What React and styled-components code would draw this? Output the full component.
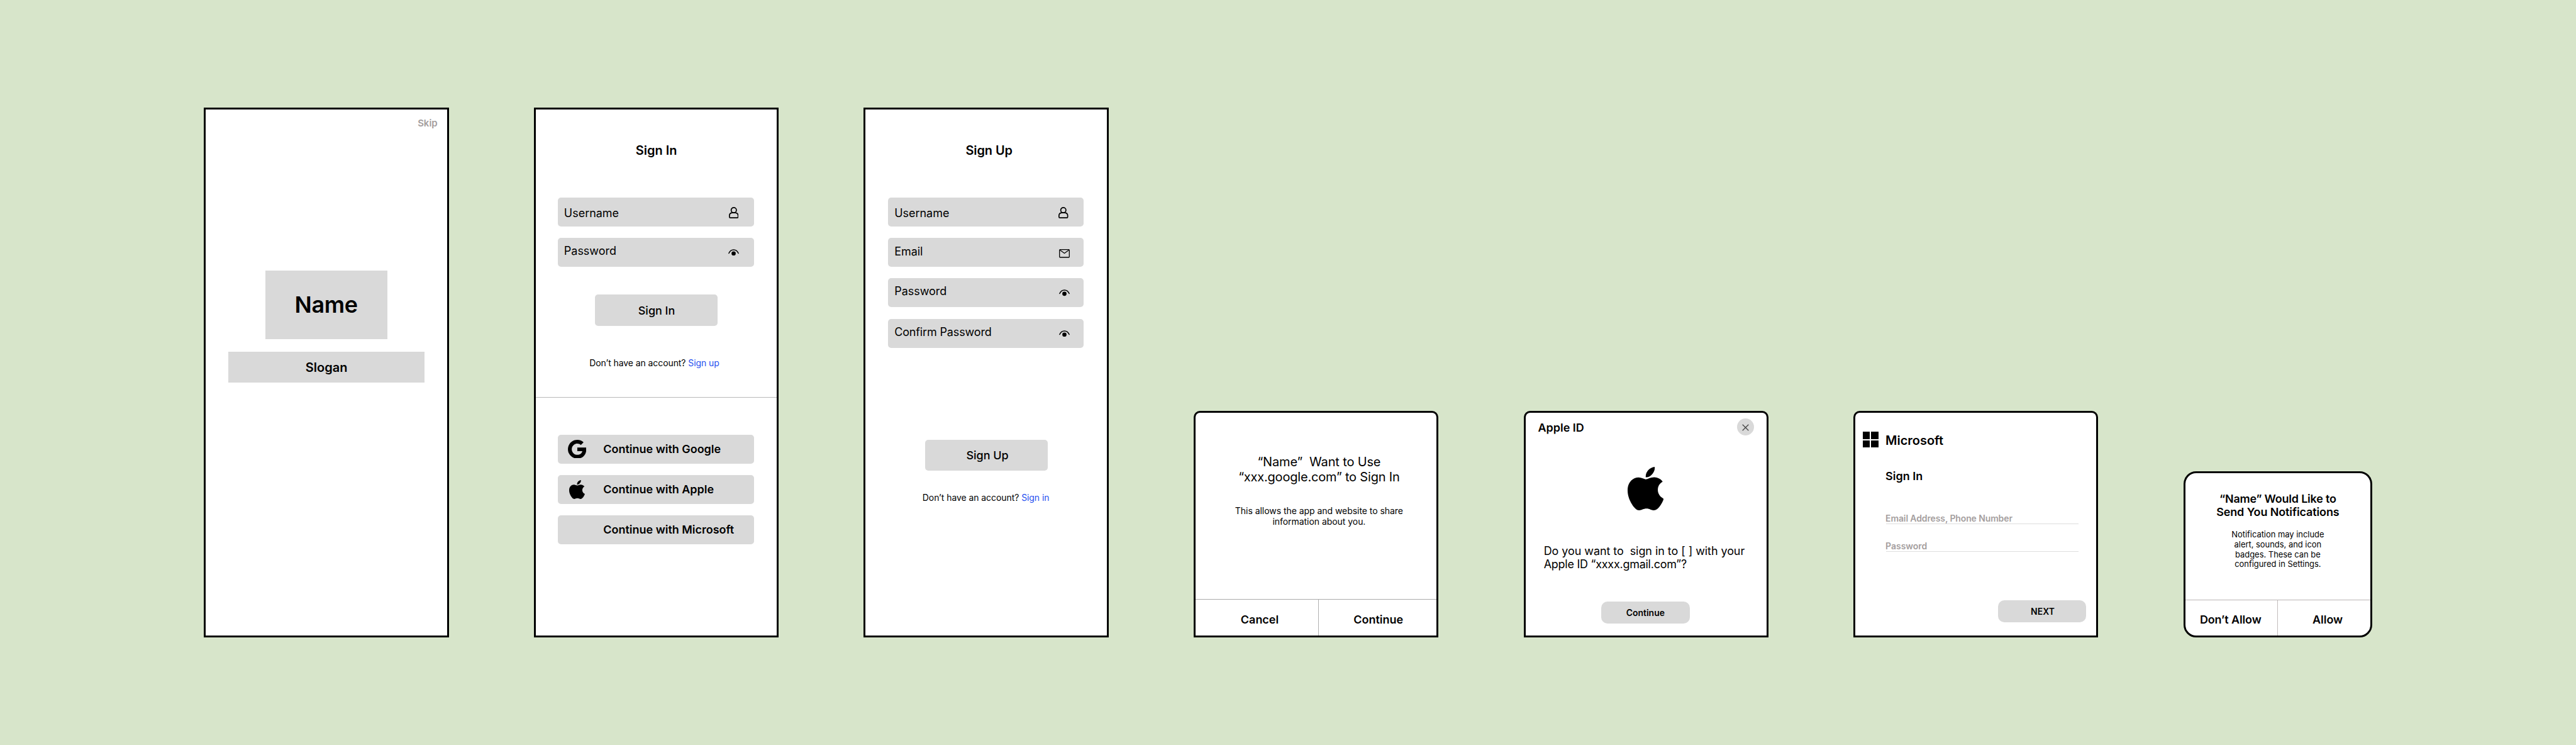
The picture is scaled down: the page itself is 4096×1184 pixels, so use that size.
import React from 'react';
import styled, { createGlobalStyle } from 'styled-components';
import { AiFillApple, AiOutlineGoogle } from 'react-icons/ai';

const u = (n) => `${(n * 0.9986).toFixed(2)}px`;

const GlobalStyle = createGlobalStyle`
  * { box-sizing: border-box; }
  html, body { margin: 0; padding: 0; }
  body {
    background: #d7e5ca;
    color: #000;
    font-family: Inter, "Liberation Sans", sans-serif;
  }
`;

const Board = styled.main`
  width: 4096px;
  height: 1184px;
  padding: 170.7px 0 0 324.4px;
  background: #d7e5ca;
  overflow: hidden;
`;

const Screens = styled.div`
  display: flex;
  align-items: flex-end;
  gap: 135.1px;
  height: 842.8px;
`;

const Frame = styled.section`
  flex: none;
  display: flex;
  flex-direction: column;
  width: ${(p) => u(p.$w || 390)};
  height: ${(p) => u(p.$h || 844)};
  margin-bottom: ${(p) => (p.$h ? '0.4px' : '0')};
  border: 3px solid #000;
  border-radius: ${(p) => p.$radius || '0'};
  background: #fff;
  overflow: hidden;
`;

const Text = styled.p`
  margin: 0;
  margin-top: ${(p) => u(p.$top || 0)};
  margin-left: ${(p) => u(p.$left || 0)};
  font-size: ${(p) => u(p.$size || 18)};
  line-height: ${(p) => u(p.$lh || Math.round((p.$size || 18) * 12.1) / 10)};
  font-weight: ${(p) => p.$weight || 400};
  text-align: ${(p) => p.$align || 'left'};
  letter-spacing: ${(p) => p.$track || 0}px;
  color: ${(p) => p.$color || '#000'};
  white-space: pre;
`;

const Line = styled.span`
  display: block;
  letter-spacing: ${(p) => p.$track}px;
`;

const Skip = styled.a`
  align-self: flex-end;
  margin: ${u(13.5)} ${u(15.2)} 0 0;
  font-size: ${u(15)};
  line-height: ${u(18)};
  font-weight: 600;
  color: #a49e9e;
`;

const Placeholder = styled.div`
  align-self: center;
  display: flex;
  align-items: center;
  justify-content: center;
  margin-top: ${(p) => u(p.$top)};
  width: ${(p) => u(p.$w)};
  height: ${(p) => u(p.$h)};
  background: #d9d9d9;
`;

const Stack = styled.div`
  display: flex;
  flex-direction: column;
  gap: ${u(18.4)};
  width: ${u(312.2)};
  margin: ${(p) => u(p.$top)} 0 0 ${u(35.2)};
`;

const FieldBox = styled.label`
  display: flex;
  align-items: flex-start;
  height: ${u(46)};
  padding-left: ${(p) => u(p.$pad)};
  border-radius: 5px;
  background: #d9d9d9;
`;

const FieldIcon = styled.span`
  display: flex;
  margin: ${(p) => u(p.$top)} ${(p) => u(p.$right)} 0 auto;
`;

const Provider = styled.button`
  display: grid;
  grid-template-columns: ${u(72.4)} 1fr;
  align-items: center;
  height: ${u(46)};
  padding: 0;
  border: 0;
  border-radius: 5px;
  background: #d9d9d9;
  font: 600 ${u(18)} / ${u(21.8)} Inter, sans-serif;
  color: #000;
  text-align: left;
`;

const ProviderIcon = styled.span`
  display: flex;
  justify-content: center;
  padding-right: ${u(11)};
`;

const Button = styled.button`
  align-self: flex-start;
  flex: none;
  display: flex;
  align-items: center;
  justify-content: center;
  width: ${(p) => u(p.$w)};
  height: ${(p) => u(p.$h)};
  margin: ${(p) => u(p.$top)} 0 0 ${(p) => u(p.$left)};
  padding: 0 0 0 ${(p) => u(p.$shift || 0)};
  border: 0;
  border-radius: ${(p) => p.$radius}px;
  background: #d9d9d9;
  color: #000;
  font-family: Inter, sans-serif;
  font-size: ${(p) => u(p.$size)};
  font-weight: ${(p) => p.$weight};
`;

const Link = styled.a`
  color: #1f4ff0;
`;

const Divider = styled.hr`
  flex: none;
  width: 100%;
  height: 1px;
  margin: ${(p) => u(p.$top)} 0 0;
  border: 0;
  background: #b8b8b8;
`;

const Actions = styled.footer`
  display: flex;
  flex: 1;
  margin-top: ${(p) => u(p.$top)};
  border-top: 1px solid ${(p) => p.$line};
`;

const Action = styled.button`
  display: flex;
  align-items: center;
  justify-content: center;
  width: ${(p) => (p.$w ? u(p.$w) : 'auto')};
  flex: ${(p) => (p.$w ? 'none' : 1)};
  padding: ${(p) => p.$pad};
  border: 0;
  border-left: ${(p) => (p.$line ? `1px solid ${p.$line}` : '0')};
  background: transparent;
  color: #000;
  font: 600 ${u(18)} / ${u(21.8)} Inter, sans-serif;
  letter-spacing: ${(p) => p.$track || 0}px;
  white-space: pre;
`;

const TitleBar = styled.header`
  display: flex;
  align-items: flex-start;
  justify-content: space-between;
  padding: ${u(9.7)} ${u(20)} 0 ${u(20)};
`;

const Close = styled.button`
  display: flex;
  align-items: center;
  justify-content: center;
  width: ${u(27.2)};
  height: ${u(27.2)};
  padding: 1px 0 0 0;
  border: 0;
  border-radius: 50%;
  background: #d9d9d9;
`;

const AppleMark = styled.div`
  display: flex;
  margin: ${u(49.7)} 0 0 ${u(162.4)};
`;

const Brand = styled.header`
  display: flex;
  align-items: flex-start;
  margin: ${u(30.8)} 0 0 ${u(11.9)};
`;

const Tiles = styled.span`
  display: grid;
  grid-template-columns: 1fr 1fr;
  gap: 2px;
  width: 25px;
  height: 25px;
`;

const Tile = styled.i`
  background: #000;
`;

const Underlined = styled.div`
  width: ${u(306.2)};
  margin: ${(p) => u(p.$top)} 0 0 ${u(48.9)};
  border-bottom: 1px solid #dedede;
`;

const AppleGlyph = styled(AiFillApple)`
  width: ${(p) => p.width};
  height: ${(p) => p.height};
`;

const GoogleGlyph = styled(AiOutlineGoogle)`
  width: 29.3px;
  height: 29.8px;
`;

function UserIcon() {
  return (
    <svg width="15.5" height="18" viewBox="0 0 15.5 18" fill="none" stroke="#000" strokeWidth="1.7">
      <circle cx="7.75" cy="5" r="4.15" />
      <path d="M4.9 9.2H10.6C13 9.6 14.65 11.3 14.65 13.6V15.7Q14.65 17.1 13.2 17.1H2.3Q.85 17.1 .85 15.7V13.6C.85 11.3 2.5 9.6 4.9 9.2Z" />
    </svg>
  );
}

function EyeIcon() {
  return (
    <svg width="17" height="10.4" viewBox="0 0 17 10.4">
      <path d="M.9 6.6C2.3 3.1 5.2.9 8.5.9S14.7 3.1 16.1 6.6" fill="none" stroke="#000" strokeWidth="1.5" strokeLinecap="round" />
      <circle cx="8.5" cy="6.8" r="3.4" />
    </svg>
  );
}

function MailIcon() {
  return (
    <svg width="17" height="13.7" viewBox="0 0 17 13.7" fill="none" stroke="#000" strokeWidth="1.3" strokeLinejoin="round">
      <rect x=".7" y=".7" width="15.6" height="12.3" rx="1" />
      <path d="M1.2 1.3L8.5 6.6L15.8 1.3" />
    </svg>
  );
}

function Field({ label, pad, textTop, iconTop, iconRight, icon, track }) {
  return (
    <FieldBox $pad={pad}>
      <Text $top={textTop} $track={track}>{label}</Text>
      <FieldIcon $top={iconTop} $right={iconRight}>{icon}</FieldIcon>
    </FieldBox>
  );
}

const Apple = ({ w, h }) => (
  <AppleGlyph viewBox="163 96 699 832" preserveAspectRatio="none" width={`${w}px`} height={`${h}px`} />
);

const grey = '#a49e9e';

export default function App() {
  return (
    <Board>
      <GlobalStyle />
      <Screens>
        <Frame>
          <Skip>Skip</Skip>
          <Placeholder $w={195} $h={108.8} $top={225.3}>
            <Text $size={36} $weight={600} $track={-0.3} $left={-1}>Name</Text>
          </Placeholder>
          <Placeholder $w={312.2} $h={49.4} $top={19.9}>
            <Text $size={20} $weight={600} $top={1}>Slogan</Text>
          </Placeholder>
        </Frame>

        <Frame>
          <Text $size={20} $weight={600} $align="center" $top={52.9}>Sign In</Text>
          <Stack $top={63.2}>
            <Field label="Username" pad={9.8} textTop={13.8} iconTop={15.2} iconRight={24.6} icon={<UserIcon />} />
            <Field label="Password" pad={9.8} textTop={9.8} iconTop={17.7} iconRight={24} icon={<EyeIcon />} />
          </Stack>
          <Button $w={195} $h={50} $top={44.3} $left={94.2} $radius={5} $size={18} $weight={500} $shift={1.4}>Sign In</Button>
          <Text $size={14} $lh={17} $top={50} $left={85.4} $track={-0.07}>
            Don’t have an account? <Link>Sign up</Link>
          </Text>
          <Divider $top={46.4} />
          <Stack $top={58.3}>
            <Provider><ProviderIcon><GoogleGlyph viewBox="136.2 128.5 751.7 767.5" /></ProviderIcon>Continue with Google</Provider>
            <Provider><ProviderIcon><Apple w={25} h={30} /></ProviderIcon>Continue with Apple</Provider>
            <Provider><ProviderIcon />Continue with Microsoft</Provider>
          </Stack>
        </Frame>

        <Frame>
          <Text $size={20} $weight={600} $align="center" $top={52.9} $left={9} $track={-0.1}>Sign Up</Text>
          <Stack $top={63.2}>
            <Field label="Username" pad={10.6} textTop={13.8} iconTop={15.2} iconRight={24.7} icon={<UserIcon />} />
            <Field label="Email" pad={10.6} textTop={10.7} iconTop={18} iconRight={22} icon={<MailIcon />} />
            <Field label="Password" pad={10.6} textTop={10} iconTop={17.9} iconRight={22} icon={<EyeIcon />} />
            <Field label="Confirm Password" pad={10.6} textTop={10.2} iconTop={18.1} iconRight={22} icon={<EyeIcon />} track={-0.12} />
          </Stack>
          <Button $w={195.4} $h={49.4} $top={146.7} $left={94.2} $radius={5} $size={18} $weight={500} $shift={4}>Sign Up</Button>
          <Text $size={14} $lh={17} $top={33.5} $left={90.5} $track={-0.06}>
            Don’t have an account? <Link>Sign in</Link>
          </Text>
        </Frame>

        <Frame $h={361} $radius="10px 10px 0 0">
          <Text $size={20} $lh={24.2} $align="center" $top={66.2} $left={9.4}>
            <Line $track={-0.13}>“Name”{'  '}Want to Use</Line>
            <Line $track={-0.17}>“xxx.google.com” to Sign In</Line>
          </Text>
          <Text $size={14} $lh={17} $align="center" $top={33} $left={9.4} $track={-0.03}>
            {'This allows the app and website to share\ninformation about you.'}
          </Text>
          <Actions $top={115.6} $line="#aaa">
            <Action $w={195.3} $pad="7px 0 0 9px">Cancel</Action>
            <Action $line="#b0b0b0" $pad="7px 0 0 2px">Continue</Action>
          </Actions>
        </Frame>

        <Frame $h={361} $radius="10px 10px 0 0">
          <TitleBar>
            <Text $weight={600} $top={3.4}>Apple ID</Text>
            <Close aria-label="Close">
              <svg width="11" height="11" viewBox="0 0 11 11" stroke="#444" strokeWidth="1.3">
                <path d="M.7.7L10.3 10.3M10.3.7L.7 10.3" />
              </svg>
            </Close>
          </TitleBar>
          <AppleMark><Apple w={57.5} h={69} /></AppleMark>
          <Text $top={53.7} $left={29.2} $lh={21.7}>
            <Line $track={-0.05}>Do you want to{'  '}sign in to [ ] with your</Line>
            <Line $track={-0.24}>Apple ID “xxxx.gmail.com”?</Line>
          </Text>
          <Button $w={140.8} $h={35.3} $top={48.2} $left={120.7} $radius={10} $size={14} $weight={600}>Continue</Button>
        </Frame>

        <Frame $h={361} $radius="10px 10px 0 0">
          <Brand>
            <Tiles><Tile /><Tile /><Tile /><Tile /></Tiles>
            <Text $size={20} $weight={600} $top={1.7} $left={11.2}>Microsoft</Text>
          </Brand>
          <Text $weight={600} $left={48.1} $top={33.6}>Sign In</Text>
          <Underlined $top={48.7}>
            <Text $size={14} $lh={16} $weight={600} $color={grey} $left={-0.8} $track={-0.1}>Email Address, Phone Number</Text>
          </Underlined>
          <Underlined $top={26.6}>
            <Text $size={14} $lh={16} $weight={600} $color={grey} $left={-0.8}>Password</Text>
          </Underlined>
          <Button $w={140.8} $h={35.3} $top={77.2} $left={227} $radius={10} $size={14} $weight={600} $shift={2}>NEXT</Button>
        </Frame>

        <Frame $w={301} $h={264.5} $radius="20px">
          <Text $weight={600} $lh={21.4} $align="center" $top={29.8}>
            <Line $track={-0.2}>“Name” Would Like to</Line>
            <Line $track={-0.1}>Send You Notifications</Line>
          </Text>
          <Text $size={13} $lh={15.85} $align="center" $top={17.5} $track={-0.03}>
            {'Notification may include\nalert, sounds, and icon\nbadges. These can be\nconfigured in Settings.'}
          </Text>
          <Actions $top={48} $line="#b9b4b4">
            <Action $w={146.6} $pad="6px 2px 0 0" $track={-0.12}>Don’t Allow</Action>
            <Action $line="#c2bcbc" $pad="6px 0 0 11px">Allow</Action>
          </Actions>
        </Frame>
      </Screens>
    </Board>
  );
}
